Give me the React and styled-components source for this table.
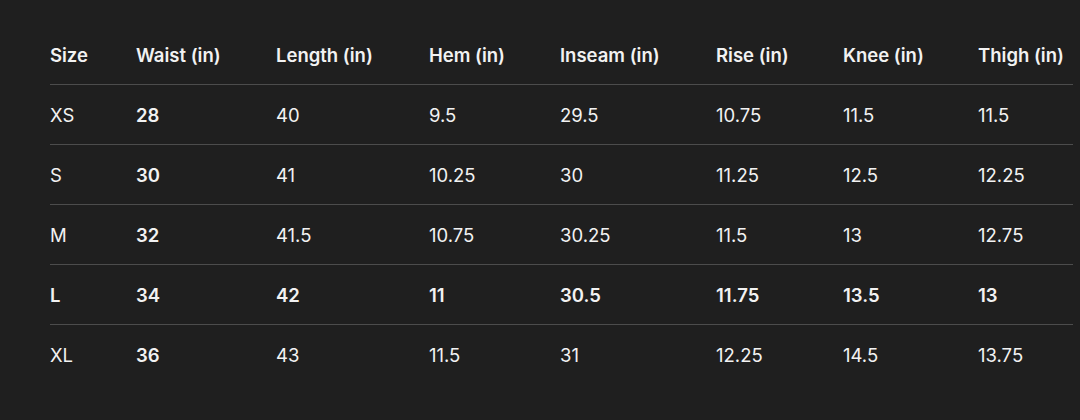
import styled, { createGlobalStyle } from "styled-components";

const GlobalStyle = createGlobalStyle`
  html, body {
    margin: 0;
    padding: 0;
    background: #1f1f1f;
  }
  body {
    font-family: Inter, "Noto Sans", sans-serif;
    -webkit-font-smoothing: antialiased;
  }
`;

const Page = styled.div`
  width: 1080px;
  height: 420px;
  background: #1f1f1f;
  padding: 25px 7px 0 50px;
  box-sizing: border-box;
`;

const Table = styled.div`
  display: grid;
  grid-template-columns: 86px 140px 153px 131px 156px 127px 135px 1fr;
`;

const Row = styled.div`
  display: contents;
`;

const Cell = styled.div`
  height: 60px;
  display: flex;
  align-items: center;
  font-size: 18.5px;
  color: #f2f2f2;
  font-weight: ${(p) => (p.$bold ? 600 : 400)};
  border-bottom: ${(p) => (p.$line ? "1px solid #4c4c4c" : "none")};
  box-sizing: border-box;
  padding-top: ${(p) => (p.$line ? "1px" : "0")};
  white-space: nowrap;
`;

const headers = [
  "Size",
  "Waist (in)",
  "Length (in)",
  "Hem (in)",
  "Inseam (in)",
  "Rise (in)",
  "Knee (in)",
  "Thigh (in)",
];

const rows = [
  ["XS", "28", "40", "9.5", "29.5", "10.75", "11.5", "11.5"],
  ["S", "30", "41", "10.25", "30", "11.25", "12.5", "12.25"],
  ["M", "32", "41.5", "10.75", "30.25", "11.5", "13", "12.75"],
  ["L", "34", "42", "11", "30.5", "11.75", "13.5", "13"],
  ["XL", "36", "43", "11.5", "31", "12.25", "14.5", "13.75"],
];

const highlighted = "L";

export default function App() {
  return (
    <>
      <GlobalStyle />
      <Page>
        <Table>
          <Row>
            {headers.map((h) => (
              <Cell key={h} $bold $line>
                {h}
              </Cell>
            ))}
          </Row>
          {rows.map((r, i) => (
            <Row key={r[0]}>
              {r.map((v, j) => (
                <Cell
                  key={j}
                  $bold={j === 1 || r[0] === highlighted}
                  $line={i < rows.length - 1}
                >
                  {v}
                </Cell>
              ))}
            </Row>
          ))}
        </Table>
      </Page>
    </>
  );
}
